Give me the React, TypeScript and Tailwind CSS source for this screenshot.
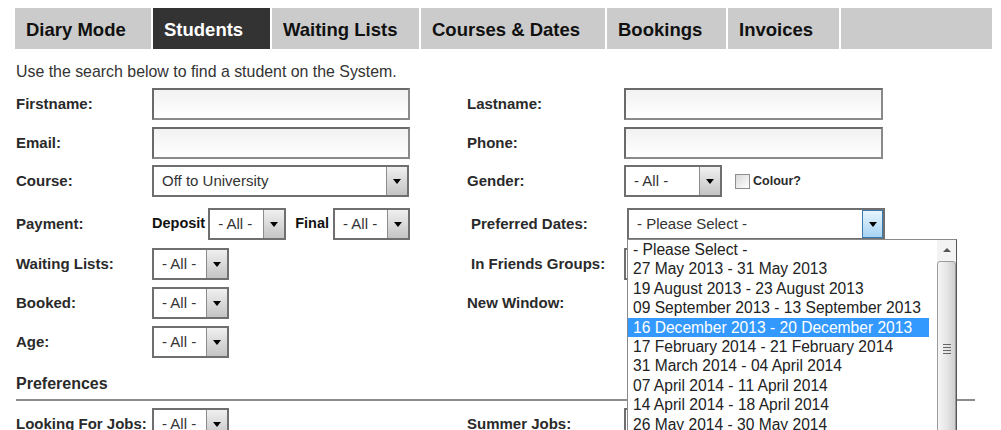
import React from "react";

const FONT = "font-['Liberation_Sans',Arial,Helvetica,sans-serif]";

const tabs = [
  { label: "Diary Mode", w: "w-[136px]" },
  { label: "Students", w: "w-[117px]", active: true },
  { label: "Waiting Lists", w: "w-[147px]" },
  { label: "Courses & Dates", w: "w-[184px]" },
  { label: "Bookings", w: "w-[119px]" },
  { label: "Invoices", w: "w-[111px]" },
  { label: "", w: "w-[151px]" },
];

const dates = [
  "- Please Select -",
  "27 May 2013 - 31 May 2013",
  "19 August 2013 - 23 August 2013",
  "09 September 2013 - 13 September 2013",
  "16 December 2013 - 20 December 2013",
  "17 February 2014 - 21 February 2014",
  "31 March 2014 - 04 April 2014",
  "07 April 2014 - 11 April 2014",
  "14 April 2014 - 18 April 2014",
  "26 May 2014 - 30 May 2014",
  "14 July 2014 - 18 July 2014",
];

function Arrow({ focused }: { focused?: boolean }) {
  return (
    <div
      className={
        focused
          ? "flex w-[21px] items-center justify-center border border-[#3d7bad] bg-gradient-to-b from-[#e8f5fe] to-[#a6d3f3]"
          : "flex w-[21px] items-center justify-center border-l border-[#8c8c8c] bg-gradient-to-b from-[#f0f0f0] to-[#c4c4c4]"
      }
    >
      <span className="h-0 w-0 border-x-[4px] border-t-[5px] border-x-transparent border-t-black" />
    </div>
  );
}

function Select({
  text = "- All -",
  w = "w-[77px]",
  focused,
}: {
  text?: string;
  w?: string;
  focused?: boolean;
}) {
  return (
    <div className={`flex h-[32px] ${w} border-2 border-[#6f6f6f] bg-white`}>
      <div className="flex flex-1 items-center overflow-hidden whitespace-nowrap pl-[8px] text-[15px] text-[#333]">
        {text}
      </div>
      <Arrow focused={focused} />
    </div>
  );
}

function TextBox({ w = "w-[258px]" }: { w?: string }) {
  return (
    <div className={`h-[32px] ${w} border-2 border-t-[#6a6a6a] border-l-[#6a6a6a] border-r-[#8a8a8a] border-b-[#8a8a8a] bg-gradient-to-b from-[#f2f2f2] to-white`} />
  );
}

function Label({ children, w, indent }: { children: React.ReactNode; w: string; indent?: boolean }) {
  return (
    <div className={`${w} ${indent ? "pl-[4px]" : ""} text-[15px] font-bold text-[#2a2a2a]`}>
      {children}
    </div>
  );
}

function Row({
  mt,
  left,
  leftLabel,
  rightLabel,
  right,
  indent,
}: {
  mt: string;
  leftLabel: string;
  left: React.ReactNode;
  rightLabel?: string;
  right?: React.ReactNode;
  indent?: boolean;
}) {
  return (
    <div className={`flex h-[32px] items-center ${mt}`}>
      <div className="flex w-[451px] items-center">
        <Label w="w-[136px]">{leftLabel}</Label>
        {left}
      </div>
      {rightLabel && (
        <div className="flex items-center">
          <Label w="w-[157px]" indent={indent}>
            {rightLabel}
          </Label>
          {right}
        </div>
      )}
    </div>
  );
}

function DatesList() {
  return (
    <div className="absolute left-0 top-[31px] z-10 flex h-[200px] w-[330px] border border-[#8a8a8a] border-r-[#555] bg-white">
      <div className="w-[301px]">
        {dates.map((d, i) => (
          <div
            key={d}
            className={
              i === 4
                ? "h-[19.4px] whitespace-nowrap bg-[#3399ff] pl-[5px] text-[15.6px] leading-[19.4px] text-white"
                : "h-[19.4px] whitespace-nowrap pl-[5px] text-[15.6px] leading-[19.4px] text-[#222]"
            }
          >
            {d}
          </div>
        ))}
      </div>
      <div className="ml-auto flex w-[19px] flex-col bg-[#f3f3f3]">
        <div className="flex h-[23px] items-center justify-center">
          <span className="h-0 w-0 border-x-[4px] border-b-[4px] border-x-transparent border-b-[#555]" />
        </div>
        <div className="flex h-[198px] items-center justify-center rounded-t-[3px] border border-[#9c9c9c] bg-gradient-to-r from-[#f6f6f6] via-[#e6e6e6] to-[#cfcfcf]">
          <div className="flex flex-col gap-[2px]">
            <span className="h-px w-[8px] bg-[#666]" />
            <span className="h-px w-[8px] bg-[#666]" />
            <span className="h-px w-[8px] bg-[#666]" />
            <span className="h-px w-[8px] bg-[#666]" />
          </div>
        </div>
      </div>
    </div>
  );
}

export default function App() {
  return (
    <div className={`${FONT} h-[430px] overflow-hidden bg-white pl-[15px]`}>
      <nav className="mt-[8px] flex h-[41px] gap-[2px]">
        {tabs.map((t, i) => (
          <div
            key={i}
            className={`${t.w} flex items-center pl-[11px] pt-[2px] text-[18.5px] font-bold ${
              t.active ? "bg-[#333] text-white" : "bg-[#cbcbcb] text-[#111]"
            }`}
          >
            {t.label}
          </div>
        ))}
      </nav>

      <p className="mt-[14px] pl-[1px] text-[15.9px] leading-[18px] text-[#333]">
        Use the search below to find a student on the System.
      </p>

      <div className="pl-[1px]">
        <Row mt="mt-[7px]" leftLabel="Firstname:" left={<TextBox />} rightLabel="Lastname:" right={<TextBox w="w-[259px]" />} />
        <Row mt="mt-[7px]" leftLabel="Email:" left={<TextBox />} rightLabel="Phone:" right={<TextBox w="w-[259px]" />} />
        <Row
          mt="mt-[6px]"
          leftLabel="Course:"
          left={<Select text="Off to University" w="w-[257px]" />}
          rightLabel="Gender:"
          right={
            <div className="flex items-center">
              <Select w="w-[98px]" />
              <span className="ml-[13px] h-[15px] w-[15px] border border-[#8e8e8e] bg-gradient-to-br from-[#d8d8d8] to-white" />
              <span className="ml-[3px] text-[12.5px] font-bold text-[#2a2a2a]">Colour?</span>
            </div>
          }
        />
        <Row
          mt="mt-[11px]"
          leftLabel="Payment:"
          left={
            <div className="flex items-center">
              <span className="text-[14.5px] font-bold text-[#111]">Deposit</span>
              <div className="ml-[3px]">
                <Select w="w-[78px]" />
              </div>
              <span className="ml-[9px] text-[14.5px] font-bold text-[#111]">Final</span>
              <div className="ml-[4px]">
                <Select w="w-[77px]" />
              </div>
            </div>
          }
          rightLabel="Preferred Dates:"
          indent
          right={
            <div className="relative ml-[3px]">
              <Select text="- Please Select -" w="w-[258px]" focused />
              <DatesList />
            </div>
          }
        />
        <Row mt="mt-[8px]" leftLabel="Waiting Lists:" left={<Select />} rightLabel="In Friends Groups:" indent right={<Select />} />
        <Row
          mt="mt-[7px]"
          leftLabel="Booked:"
          left={<Select />}
          rightLabel="New Window:"
          right={<span className="ml-[6px] h-[15px] w-[15px] border border-[#8e8e8e] bg-white" />}
        />
        <Row mt="mt-[7px]" leftLabel="Age:" left={<Select />} />

        <h3 className="mt-[16px] text-[16px] font-bold leading-[19px] text-[#2a2a2a]">Preferences</h3>
        <div className="mt-[6px] h-[2px] w-[959px] bg-[#8c8c8c]" />

        <Row mt="mt-[7px]" leftLabel="Looking For Jobs:" left={<Select />} rightLabel="Summer Jobs:" right={<Select />} />
      </div>
    </div>
  );
}
